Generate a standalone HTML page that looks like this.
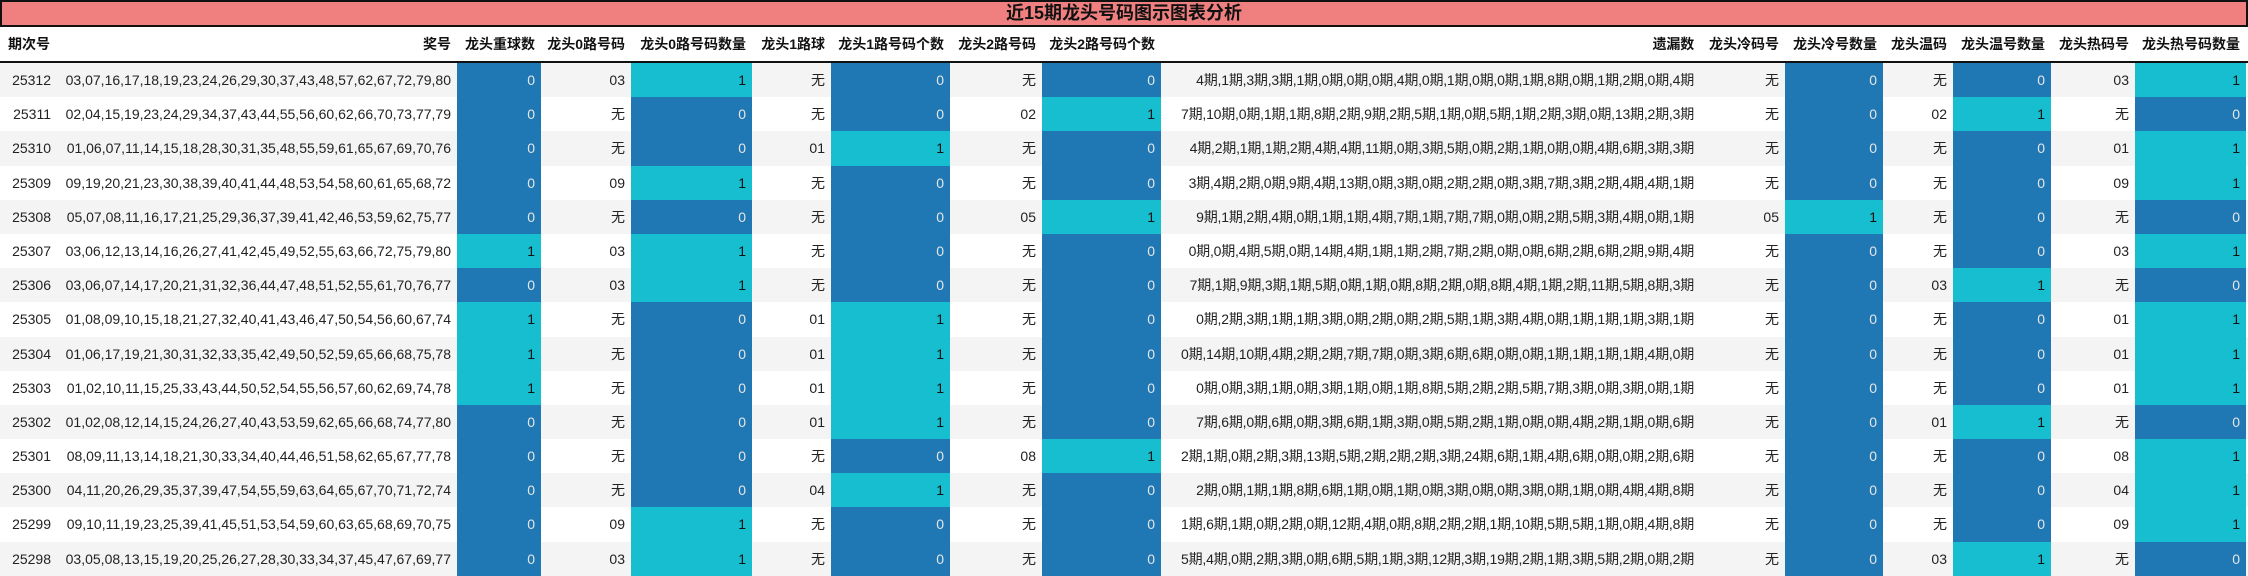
<!DOCTYPE html>
<html><head><meta charset="utf-8"><style>
*{margin:0;padding:0;box-sizing:border-box}
body{width:2248px;height:575px;background:#fff;font-family:"Liberation Sans","Noto Sans CJK SC",sans-serif;font-size:14px;color:#222;overflow:hidden}
.title{height:27px;background:#f08080;border:2px solid #111;text-align:center;font-weight:bold;font-size:18px;line-height:23px;color:#111}
.row{display:flex;height:34.2px;line-height:34.2px}
.hd{height:36px;line-height:34px;font-weight:bold;border-bottom:2px solid #111;color:#111}
.row>div{text-align:right;padding-right:6px;white-space:nowrap;overflow:hidden}
.g{background:#f4f4f4}
.b{background:#1f77b4;color:#e6e6e6}
.c{background:#17becf;color:#111}
.w0{width:57px}.w1{width:400px}.w2{width:84px}.w3{width:90px}.w4{width:121px}.w5{width:79px}.w6{width:119px}.w7{width:92px}.w8{width:119px}.w9{width:539px;letter-spacing:-0.2px}.w10{width:85px}.w11{width:98px}.w12{width:70px}.w13{width:98px}.w14{width:84px}.w15{width:111px}
.hd .w0{text-align:left;padding-left:8px}
</style></head><body>
<div class="title">近15期龙头号码图示图表分析</div>
<div class="row hd"><div class="w0">期次号</div><div class="w1">奖号</div><div class="w2">龙头重球数</div><div class="w3">龙头0路号码</div><div class="w4">龙头0路号码数量</div><div class="w5">龙头1路球</div><div class="w6">龙头1路号码个数</div><div class="w7">龙头2路号码</div><div class="w8">龙头2路号码个数</div><div class="w9">遗漏数</div><div class="w10">龙头冷码号</div><div class="w11">龙头冷号数量</div><div class="w12">龙头温码</div><div class="w13">龙头温号数量</div><div class="w14">龙头热码号</div><div class="w15">龙头热号码数量</div></div>

<div class="row g"><div class="w0">25312</div><div class="w1">03,07,16,17,18,19,23,24,26,29,30,37,43,48,57,62,67,72,79,80</div><div class="w2 b">0</div><div class="w3">03</div><div class="w4 c">1</div><div class="w5">无</div><div class="w6 b">0</div><div class="w7">无</div><div class="w8 b">0</div><div class="w9">4期,1期,3期,3期,1期,0期,0期,0期,4期,0期,1期,0期,0期,1期,8期,0期,1期,2期,0期,4期</div><div class="w10">无</div><div class="w11 b">0</div><div class="w12">无</div><div class="w13 b">0</div><div class="w14">03</div><div class="w15 c">1</div></div>

<div class="row"><div class="w0">25311</div><div class="w1">02,04,15,19,23,24,29,34,37,43,44,55,56,60,62,66,70,73,77,79</div><div class="w2 b">0</div><div class="w3">无</div><div class="w4 b">0</div><div class="w5">无</div><div class="w6 b">0</div><div class="w7">02</div><div class="w8 c">1</div><div class="w9">7期,10期,0期,1期,1期,8期,2期,9期,2期,5期,1期,0期,5期,1期,2期,3期,0期,13期,2期,3期</div><div class="w10">无</div><div class="w11 b">0</div><div class="w12">02</div><div class="w13 c">1</div><div class="w14">无</div><div class="w15 b">0</div></div>

<div class="row g"><div class="w0">25310</div><div class="w1">01,06,07,11,14,15,18,28,30,31,35,48,55,59,61,65,67,69,70,76</div><div class="w2 b">0</div><div class="w3">无</div><div class="w4 b">0</div><div class="w5">01</div><div class="w6 c">1</div><div class="w7">无</div><div class="w8 b">0</div><div class="w9">4期,2期,1期,1期,2期,4期,4期,11期,0期,3期,5期,0期,2期,1期,0期,0期,4期,6期,3期,3期</div><div class="w10">无</div><div class="w11 b">0</div><div class="w12">无</div><div class="w13 b">0</div><div class="w14">01</div><div class="w15 c">1</div></div>

<div class="row"><div class="w0">25309</div><div class="w1">09,19,20,21,23,30,38,39,40,41,44,48,53,54,58,60,61,65,68,72</div><div class="w2 b">0</div><div class="w3">09</div><div class="w4 c">1</div><div class="w5">无</div><div class="w6 b">0</div><div class="w7">无</div><div class="w8 b">0</div><div class="w9">3期,4期,2期,0期,9期,4期,13期,0期,3期,0期,2期,2期,0期,3期,7期,3期,2期,4期,4期,1期</div><div class="w10">无</div><div class="w11 b">0</div><div class="w12">无</div><div class="w13 b">0</div><div class="w14">09</div><div class="w15 c">1</div></div>

<div class="row g"><div class="w0">25308</div><div class="w1">05,07,08,11,16,17,21,25,29,36,37,39,41,42,46,53,59,62,75,77</div><div class="w2 b">0</div><div class="w3">无</div><div class="w4 b">0</div><div class="w5">无</div><div class="w6 b">0</div><div class="w7">05</div><div class="w8 c">1</div><div class="w9">9期,1期,2期,4期,0期,1期,1期,4期,7期,1期,7期,7期,0期,0期,2期,5期,3期,4期,0期,1期</div><div class="w10">05</div><div class="w11 c">1</div><div class="w12">无</div><div class="w13 b">0</div><div class="w14">无</div><div class="w15 b">0</div></div>

<div class="row"><div class="w0">25307</div><div class="w1">03,06,12,13,14,16,26,27,41,42,45,49,52,55,63,66,72,75,79,80</div><div class="w2 c">1</div><div class="w3">03</div><div class="w4 c">1</div><div class="w5">无</div><div class="w6 b">0</div><div class="w7">无</div><div class="w8 b">0</div><div class="w9">0期,0期,4期,5期,0期,14期,4期,1期,1期,2期,7期,2期,0期,0期,6期,2期,6期,2期,9期,4期</div><div class="w10">无</div><div class="w11 b">0</div><div class="w12">无</div><div class="w13 b">0</div><div class="w14">03</div><div class="w15 c">1</div></div>

<div class="row g"><div class="w0">25306</div><div class="w1">03,06,07,14,17,20,21,31,32,36,44,47,48,51,52,55,61,70,76,77</div><div class="w2 b">0</div><div class="w3">03</div><div class="w4 c">1</div><div class="w5">无</div><div class="w6 b">0</div><div class="w7">无</div><div class="w8 b">0</div><div class="w9">7期,1期,9期,3期,1期,5期,0期,1期,0期,8期,2期,0期,8期,4期,1期,2期,11期,5期,8期,3期</div><div class="w10">无</div><div class="w11 b">0</div><div class="w12">03</div><div class="w13 c">1</div><div class="w14">无</div><div class="w15 b">0</div></div>

<div class="row"><div class="w0">25305</div><div class="w1">01,08,09,10,15,18,21,27,32,40,41,43,46,47,50,54,56,60,67,74</div><div class="w2 c">1</div><div class="w3">无</div><div class="w4 b">0</div><div class="w5">01</div><div class="w6 c">1</div><div class="w7">无</div><div class="w8 b">0</div><div class="w9">0期,2期,3期,1期,1期,3期,0期,2期,0期,2期,5期,1期,3期,4期,0期,1期,1期,1期,3期,1期</div><div class="w10">无</div><div class="w11 b">0</div><div class="w12">无</div><div class="w13 b">0</div><div class="w14">01</div><div class="w15 c">1</div></div>

<div class="row g"><div class="w0">25304</div><div class="w1">01,06,17,19,21,30,31,32,33,35,42,49,50,52,59,65,66,68,75,78</div><div class="w2 c">1</div><div class="w3">无</div><div class="w4 b">0</div><div class="w5">01</div><div class="w6 c">1</div><div class="w7">无</div><div class="w8 b">0</div><div class="w9">0期,14期,10期,4期,2期,2期,7期,7期,0期,3期,6期,6期,0期,0期,1期,1期,1期,1期,4期,0期</div><div class="w10">无</div><div class="w11 b">0</div><div class="w12">无</div><div class="w13 b">0</div><div class="w14">01</div><div class="w15 c">1</div></div>

<div class="row"><div class="w0">25303</div><div class="w1">01,02,10,11,15,25,33,43,44,50,52,54,55,56,57,60,62,69,74,78</div><div class="w2 c">1</div><div class="w3">无</div><div class="w4 b">0</div><div class="w5">01</div><div class="w6 c">1</div><div class="w7">无</div><div class="w8 b">0</div><div class="w9">0期,0期,3期,1期,0期,3期,1期,0期,1期,8期,5期,2期,2期,5期,7期,3期,0期,3期,0期,1期</div><div class="w10">无</div><div class="w11 b">0</div><div class="w12">无</div><div class="w13 b">0</div><div class="w14">01</div><div class="w15 c">1</div></div>

<div class="row g"><div class="w0">25302</div><div class="w1">01,02,08,12,14,15,24,26,27,40,43,53,59,62,65,66,68,74,77,80</div><div class="w2 b">0</div><div class="w3">无</div><div class="w4 b">0</div><div class="w5">01</div><div class="w6 c">1</div><div class="w7">无</div><div class="w8 b">0</div><div class="w9">7期,6期,0期,6期,0期,3期,6期,1期,3期,0期,5期,2期,1期,0期,0期,4期,2期,1期,0期,6期</div><div class="w10">无</div><div class="w11 b">0</div><div class="w12">01</div><div class="w13 c">1</div><div class="w14">无</div><div class="w15 b">0</div></div>

<div class="row"><div class="w0">25301</div><div class="w1">08,09,11,13,14,18,21,30,33,34,40,44,46,51,58,62,65,67,77,78</div><div class="w2 b">0</div><div class="w3">无</div><div class="w4 b">0</div><div class="w5">无</div><div class="w6 b">0</div><div class="w7">08</div><div class="w8 c">1</div><div class="w9">2期,1期,0期,2期,3期,13期,5期,2期,2期,2期,3期,24期,6期,1期,4期,6期,0期,0期,2期,6期</div><div class="w10">无</div><div class="w11 b">0</div><div class="w12">无</div><div class="w13 b">0</div><div class="w14">08</div><div class="w15 c">1</div></div>

<div class="row g"><div class="w0">25300</div><div class="w1">04,11,20,26,29,35,37,39,47,54,55,59,63,64,65,67,70,71,72,74</div><div class="w2 b">0</div><div class="w3">无</div><div class="w4 b">0</div><div class="w5">04</div><div class="w6 c">1</div><div class="w7">无</div><div class="w8 b">0</div><div class="w9">2期,0期,1期,1期,8期,6期,1期,0期,1期,0期,3期,0期,0期,3期,0期,1期,0期,4期,4期,8期</div><div class="w10">无</div><div class="w11 b">0</div><div class="w12">无</div><div class="w13 b">0</div><div class="w14">04</div><div class="w15 c">1</div></div>

<div class="row"><div class="w0">25299</div><div class="w1">09,10,11,19,23,25,39,41,45,51,53,54,59,60,63,65,68,69,70,75</div><div class="w2 b">0</div><div class="w3">09</div><div class="w4 c">1</div><div class="w5">无</div><div class="w6 b">0</div><div class="w7">无</div><div class="w8 b">0</div><div class="w9">1期,6期,1期,0期,2期,0期,12期,4期,0期,8期,2期,2期,1期,10期,5期,5期,1期,0期,4期,8期</div><div class="w10">无</div><div class="w11 b">0</div><div class="w12">无</div><div class="w13 b">0</div><div class="w14">09</div><div class="w15 c">1</div></div>

<div class="row g"><div class="w0">25298</div><div class="w1">03,05,08,13,15,19,20,25,26,27,28,30,33,34,37,45,47,67,69,77</div><div class="w2 b">0</div><div class="w3">03</div><div class="w4 c">1</div><div class="w5">无</div><div class="w6 b">0</div><div class="w7">无</div><div class="w8 b">0</div><div class="w9">5期,4期,0期,2期,3期,0期,6期,5期,1期,3期,12期,3期,19期,2期,1期,3期,5期,2期,0期,2期</div><div class="w10">无</div><div class="w11 b">0</div><div class="w12">03</div><div class="w13 c">1</div><div class="w14">无</div><div class="w15 b">0</div></div>
</body></html>
